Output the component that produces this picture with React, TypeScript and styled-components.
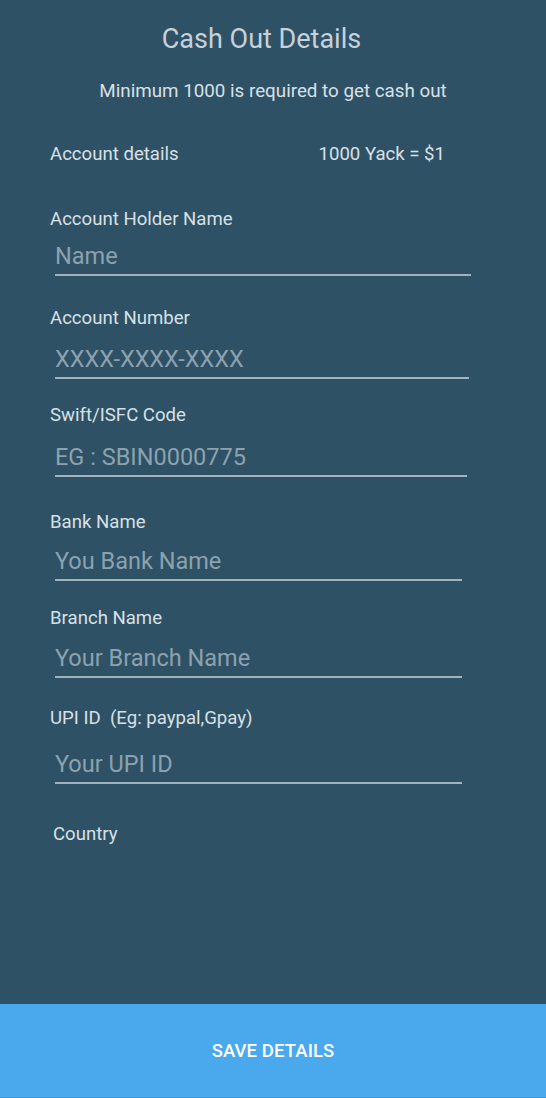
import React from 'react'
import styled, { createGlobalStyle } from 'styled-components'

const GlobalStyle = createGlobalStyle`
  html, body {
    margin: 0;
    padding: 0;
    background-color: #2e5165;
  }
  body {
    font-family: Roboto, 'Liberation Sans', sans-serif;
  }
  * {
    box-sizing: border-box;
  }
`

const Page = styled.div`
  display: flex;
  flex-direction: column;
  min-height: 100vh;
  width: 100%;
  background-color: #2e5165;
`
const Content = styled.div`
  flex: 1;
  display: flex;
  flex-direction: column;
`
const Title = styled.h1`
  margin: 23px 23px 0 0;
  font-size: 27px;
  line-height: 32px;
  font-weight: 400;
  color: #c6d1d9;
  text-align: center;
`
const Subtitle = styled.p`
  margin: 25px 0 0;
  font-size: 18.8px;
  line-height: 22px;
  color: #d8e0e6;
  text-align: center;
`
const InfoRow = styled.div`
  display: flex;
  justify-content: space-between;
  margin-top: 41px;
  padding: 0 101px 0 50px;
  font-size: 18.6px;
  line-height: 22px;
  color: #d8e0e6;
`
const Form = styled.form`
  display: flex;
  flex-direction: column;
`
const Field = styled.label<{ $top: number }>`
  display: flex;
  flex-direction: column;
  margin-top: ${(p) => p.$top}px;
`
const LabelText = styled.span<{ $left?: number }>`
  padding-left: ${(p) => p.$left ?? 50}px;
  font-size: 18.6px;
  line-height: 22px;
  color: #d8e0e6;
`
const TextInput = styled.input<{ $gap: number; $width: number }>`
  margin: ${(p) => p.$gap}px 0 0 55px;
  width: ${(p) => p.$width}px;
  height: 34px;
  padding: 0 0 4px;
  border: none;
  border-bottom: 2px solid #9fb2be;
  background: transparent;
  outline: none;
  font-family: Roboto, 'Liberation Sans', sans-serif;
  font-size: 23.5px;
  line-height: 28px;
  color: #d8e0e6;

  &::placeholder {
    color: #8ca2af;
    opacity: 1;
  }
`
const SaveButton = styled.button`
  display: block;
  width: 100%;
  height: 94px;
  border: none;
  border-bottom: 1px solid #3b93d2;
  background-color: #4aa8ec;
  color: #ffffff;
  font-family: Roboto, 'Liberation Sans', sans-serif;
  font-size: 18.5px;
  font-weight: 500;
  letter-spacing: 0.1px;
  cursor: pointer;
`

interface FieldDef {
  label: string
  placeholder: string
  top: number
  gap: number
  width: number
}

const fields: FieldDef[] = [
  { label: 'Account Holder Name', placeholder: 'Name', top: 43, gap: 12, width: 416 },
  { label: 'Account Number', placeholder: 'XXXX-XXXX-XXXX', top: 31, gap: 16, width: 414 },
  { label: 'Swift/ISFC Code', placeholder: 'EG : SBIN0000775', top: 25, gap: 17, width: 412 },
  { label: 'Bank Name', placeholder: 'You Bank Name', top: 34, gap: 14, width: 407 },
  { label: 'Branch Name', placeholder: 'Your Branch Name', top: 26, gap: 15, width: 407 },
  { label: 'UPI ID\u00a0 (Eg: paypal,Gpay)', placeholder: 'Your UPI ID', top: 29, gap: 21, width: 407 },
]

const App: React.FC = () => {
  return (
    <Page>
      <GlobalStyle />
      <Content>
        <Title>Cash Out Details</Title>
        <Subtitle>Minimum 1000 is required to get cash out</Subtitle>
        <InfoRow>
          <span>Account details</span>
          <span>1000 Yack = $1</span>
        </InfoRow>
        <Form onSubmit={(e) => e.preventDefault()}>
          {fields.map((f) => (
            <Field key={f.label} $top={f.top}>
              <LabelText>{f.label}</LabelText>
              <TextInput placeholder={f.placeholder} $gap={f.gap} $width={f.width} />
            </Field>
          ))}
          <Field $top={39}>
            <LabelText $left={53}>Country</LabelText>
          </Field>
        </Form>
      </Content>
      <SaveButton type={'button'}>SAVE DETAILS</SaveButton>
    </Page>
  )
}

export default App
